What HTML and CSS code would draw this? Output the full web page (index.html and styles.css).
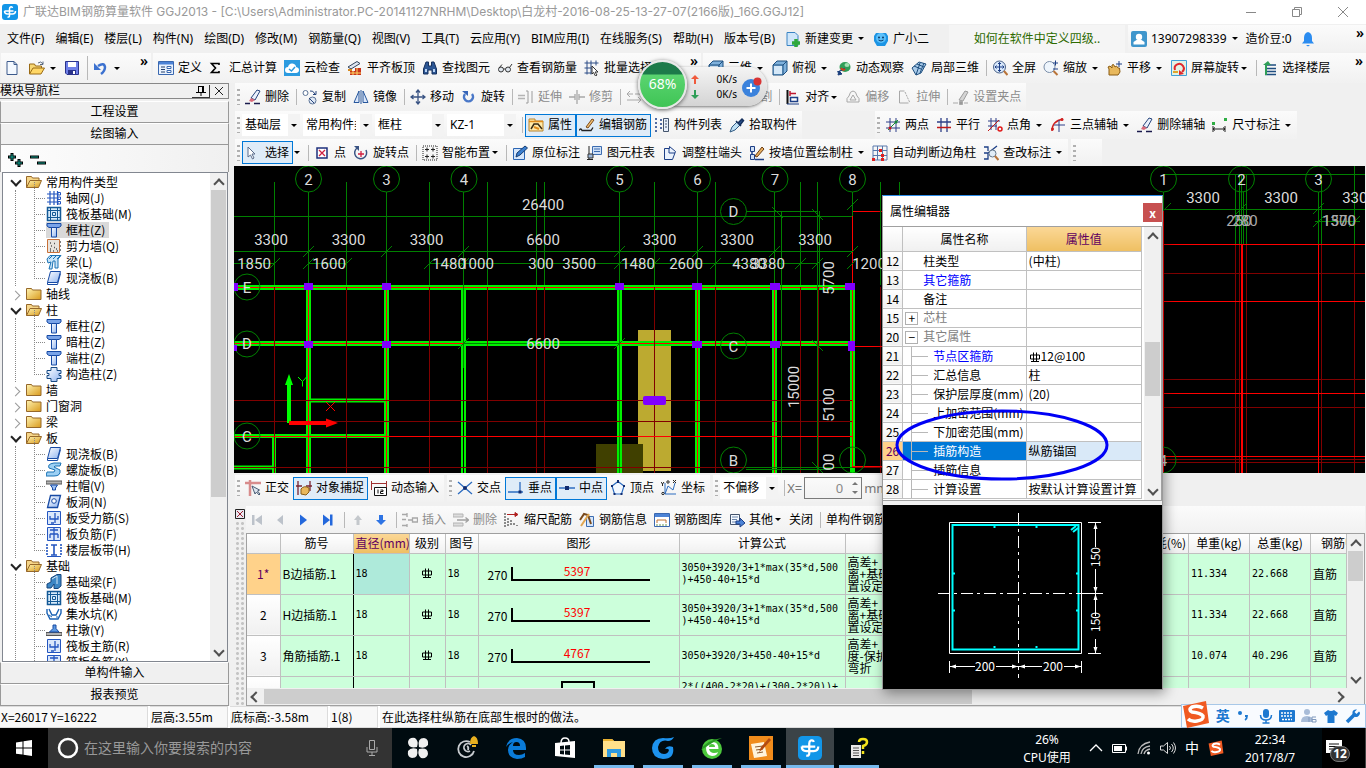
FILE: index.html
```
<!DOCTYPE html>
<html lang="zh-CN">
<head>
  <meta charset="UTF-8" />
  <meta name="viewport" content="width=device-width, initial-scale=1.0"/>
  <title>广联达BIM钢筋算量软件 GGJ2013</title>
  <link rel="stylesheet" href="styles.css">
</head>
<body>

  <!-- icon sprite -->
  <svg class="sprite" aria-hidden="true">
    <defs>
      <linearGradient id="gBlue" x1="0" y1="0" x2="1" y2="1"><stop offset="0" stop-color="#fff"/><stop offset="1" stop-color="#8fb4f0"/></linearGradient>
      <linearGradient id="gGold" x1="0" y1="0" x2="1" y2="1"><stop offset="0" stop-color="#fff3b0"/><stop offset="1" stop-color="#d99a1c"/></linearGradient>
    </defs>
    <symbol id="i-app" viewBox="0 0 16 16"><rect width="16" height="16" rx="3" fill="#1296e8"/><path d="M10.500 4Q10 2.500 8.500 3q-1 .5-1 2v6.500q0 2-2 1.500M2.500 7h9M2.500 7q0 3 3 3h5q3 0 3-3" fill="none" stroke="#fff" stroke-width="1.500"/></symbol>
    <symbol id="i-new" viewBox="0 0 16 16"><path d="M1 1.500h7l3 3v10H1z" fill="#f4f9ff" stroke="#3c5a8c"/><path d="M8 1.500v3h3" fill="none" stroke="#3c5a8c"/></symbol>
    <symbol id="i-open" viewBox="0 0 16 16"><path d="M.5 14V4h5l1 2h6v2" fill="#f7d774" stroke="#9a6a14"/><path d="M.5 14 4 8h11.500L12 14z" fill="#ffd766" stroke="#9a6a14"/><path d="M9 3q3-2.500 5 1m0-2.500v3h-3" fill="none" stroke="#5a6a80"/></symbol>
    <symbol id="i-save" viewBox="0 0 16 16"><path d="M1.500 1.500h13v13H3l-1.500-1.500z" fill="#6f7fe8" stroke="#2a338c"/><path d="M4 2h8v5H4z" fill="#fff"/><path d="M4 10h8v4.500H4z" fill="#2a338c"/><path d="M9 11h2v3H9z" fill="#fff"/></symbol>
    <symbol id="i-undo" viewBox="0 0 16 16"><path d="M5 6q6-4 7 1 0 4-4 7" fill="none" stroke="#3c72d0" stroke-width="2.500"/><path d="M1 3v7h7z" fill="#3c72d0"/></symbol>
    <symbol id="i-define" viewBox="0 0 16 16"><path d="M.5 1.500h15v13H.5z" fill="#eaf2fd" stroke="#3a68b0"/><path d="M1 2h14v2.500H1z" fill="#4c83d6"/><path d="M3 7h4M3 9.500h4M3 12h4" stroke="#24406c"/><path d="M9 6.500h4v2H9zM9 10.500h4v2H9z" fill="#fff" stroke="#3a68b0"/></symbol>
    <symbol id="i-sigma" viewBox="0 0 16 16"><path d="M10 5V3.500H2.500L6.500 8l-4 4.500H10V11" fill="none" stroke="#000" stroke-width="1.600"/></symbol>
    <symbol id="i-cloud" viewBox="0 0 16 16"><path d="M0 0h16v16H0z" fill="#2b9be0"/><path d="M4 13q-3 0-3-3t3-3q1-4 4.500-3.500T12 7q3 .5 3 3t-3 3z" fill="#fff"/><path d="m5 9 2.500 2L11 7" fill="none" stroke="#2b9be0" stroke-width="1.500"/></symbol>
    <symbol id="i-align" viewBox="0 0 16 16"><path d="m1 7 9-5.500 3 2L4 9z" fill="#dfe6f0" stroke="#33445c"/><path d="M3 11h5v-3h6v7H3z" fill="#c8341c"/><path d="M3 13h11M6 11v4M10 8v7" stroke="#ffd766"/><path d="M1 10h4" stroke="#d98a1c" stroke-width="2"/></symbol>
    <symbol id="i-find" viewBox="0 0 16 16"><path d="M4 2h2.500v4h3V2H12l2.500 7v5H10v-4H6v4H1.500V9z" fill="#2c5694" stroke="#16305c"/><path d="M3 9h2v3H3zM11 9h2v3h-2z" fill="#b8d2f4"/></symbol>
    <symbol id="i-glasses" viewBox="0 0 16 16"><circle cx="4" cy="9.500" r="2.500" fill="#dfe6ee" stroke="#333"/><circle cx="11" cy="9.500" r="2.500" fill="#dfe6ee" stroke="#333"/><path d="M6.500 9h2M12.500 7.500 15 4M2 8 5 4.500" fill="none" stroke="#333"/></symbol>
    <symbol id="i-batch" viewBox="0 0 16 16"><path d="M.5 3h14M.5 8h7M.5 13h7M3 .5v14M7 .5v14M12 .5v5" fill="none" stroke="#2c4c86"/><path d="m8 6 6 6-3 0 2 3-1.500 1-2-3.500L8 14z" fill="#fff" stroke="#333"/></symbol>
    <symbol id="i-cube" viewBox="0 0 16 16"><path d="M1 5 5 1h10v10l-4 4H1z" fill="#7fb1dc" stroke="#1d4e7e"/><path d="M1 5h10v10M11 5l4-4" fill="none" stroke="#1d4e7e"/><path d="M2 6h8v8H2z" fill="#d5e8f8"/></symbol>
    <symbol id="i-orbit" viewBox="0 0 16 16"><ellipse cx="9" cy="7" rx="5.500" ry="5" fill="#2f9e57"/><ellipse cx="11" cy="5" rx="2.500" ry="2" fill="#9fe0b0"/><path d="M1 12q5-1 8-4M2 15l4-1-3-3z" stroke="#1b3f7c" fill="#1b3f7c"/><path d="M5 8q2 3 4 1" stroke="#d23a1c" stroke-width="2" fill="none"/></symbol>
    <symbol id="i-local" viewBox="0 0 16 16"><path d="m1 8 7-6 7 2-5 9-5 2z" fill="#a9cbea" stroke="#1d4e7e"/><path d="m3 6 7 3M6 4l7 3M5 15 9 3M9 13l4-10" fill="none" stroke="#1d4e7e"/></symbol>
    <symbol id="i-full" viewBox="0 0 16 16"><circle cx="7.500" cy="7" r="6" fill="#d8e8fb" stroke="#4a6288"/><path d="M7.500 2.500v9M3 7h9M6 4l1.500-1.500L9 4M6 10l1.500 1.500L9 10M4.500 5.500 3 7l1.500 1.500M10.500 5.500 12 7l-1.500 1.500" fill="none" stroke="#1d3f86"/><path d="m12 11 3.500 4" stroke="#b9743a" stroke-width="2"/></symbol>
    <symbol id="i-zoom" viewBox="0 0 16 16"><circle cx="6.500" cy="7" r="5.500" fill="#eef5fc" stroke="#7a8da8"/><path d="m10.500 11 4 4" stroke="#b9743a" stroke-width="2"/><path d="M10 3h5M12.500 .5v5M10 9h5" stroke="#1d3f86"/></symbol>
    <symbol id="i-pan" viewBox="0 0 16 16"><path d="M2 15V9l-1-2 2-1 2 2V5l1.500-.5L8 7l1.500-1L11 8l1.500 0 .5 4-2 3z" fill="#e8b85c" stroke="#8a5c14"/><path d="M12 1v6M9 4h6" stroke="#1d3f86"/></symbol>
    <symbol id="i-scrrot" viewBox="0 0 16 16"><path d="M.5.500h15v15H.5z" fill="#e2f2e4" stroke="#3fa0d8"/><path d="M4 10a4.500 4.500 0 1 1 7 2" fill="none" stroke="#e0282c" stroke-width="2"/><path d="M8 10v5l5-1z" fill="#e0282c"/><path d="M2 12h5" stroke="#e0a62c" stroke-width="2"/></symbol>
    <symbol id="i-floor" viewBox="0 0 16 16"><path d="M3 5h11M4 8.500h10M4 11.500h10M3 14.500h11" stroke="#1f4e80" stroke-width="1.500"/><path d="M6 1 1 5h8z" fill="#2f9e57"/><path d="M4 5v10" stroke="#2f9e57" stroke-width="2"/></symbol>
    <symbol id="i-erase" viewBox="0 0 16 16"><path d="M6 9 12 1l3 1-5 9z" fill="#eaf0fb" stroke="#26447c"/><path d="M6 9l4 2-3 2-3-1z" fill="#d86a7a"/><path d="M0 14.500h5M9 14.500h6" stroke="#1a1a4c" stroke-width="1.500"/></symbol>
    <symbol id="i-copy" viewBox="0 0 16 16"><circle cx="3.500" cy="4" r="2.500" fill="#fff" stroke="#5c7396"/><circle cx="10.500" cy="11.500" r="3.500" fill="#dfe8f5" stroke="#5c7396"/><path d="M7 9l5 5M8 2q3-1 5 3m1-3v3.500h-3" fill="none" stroke="#26447c"/></symbol>
    <symbol id="i-mirror" viewBox="0 0 16 16"><path d="M6 2v11.500H1zM10 2v11.500h5z" fill="#dbe7fa" stroke="#26569c"/><path d="M8 1v14" stroke="#26569c"/></symbol>
    <symbol id="i-move" viewBox="0 0 16 16"><path d="M8 1v14M1 8h14M6 3.500 8 1l2 2.500M6 12.500 8 15l2-2.500M3.500 6 1 8l2.500 2M12.500 6 15 8l-2.500 2" fill="none" stroke="#3a5484" stroke-width="1.300"/></symbol>
    <symbol id="i-rotate" viewBox="0 0 16 16"><path d="M4 5a4.500 4.500 0 1 0 7 0" fill="none" stroke="#4a78c8" stroke-width="2.500"/><path d="M1 2h6v5z" fill="#3765b8"/></symbol>
    <symbol id="i-extend" viewBox="0 0 16 16"><path d="M0 6.500h7M0 9.500h7" stroke="#b4b4b4" stroke-width="1.500"/><path d="M8 2h2v12H8M14 2v12" fill="none" stroke="#9c9c9c"/></symbol>
    <symbol id="i-trim" viewBox="0 0 16 16"><path d="M0 8h6M10 8h6M6 5v6M10 5v6M8 1v14" stroke="#a8a8a8" stroke-width="1.300"/></symbol>
    <symbol id="i-break" viewBox="0 0 16 16"><path d="M1 5h6M9 5h6M1 11h14M4 2 1 5l3 3M12 8l3 3-3 3" fill="none" stroke="#a8a8a8"/></symbol>
    <symbol id="i-justify" viewBox="0 0 16 16"><path d="M2.500 1v14" stroke="#101010" stroke-width="2"/><path d="M5 4.500h6M5 2v5" stroke="#c01830" stroke-width="1.500"/><path d="M5.500 8.500h7v4h-7z" fill="#fff" stroke="#1d3f86" stroke-width="1.500"/><path d="M2 15h12" stroke="#1d3f86"/></symbol>
    <symbol id="i-offset" viewBox="0 0 16 16"><path d="M8 2q3 0 4 5 3 2 2 6H2Q1 9 4 7 5 2 8 2z" fill="none" stroke="#a8a8a8"/><path d="M8 6l3 5H5z" fill="none" stroke="#a8a8a8"/></symbol>
    <symbol id="i-stretch" viewBox="0 0 16 16"><path d="M3.500 2v12h9M3.500 2h5" fill="none" stroke="#a8a8a8"/><path d="M9 3l5 11" stroke="#a8a8a8" stroke-dasharray="2 1"/></symbol>
    <symbol id="i-grip" viewBox="0 0 16 16"><path d="m6 11 6-9 3 1-5 9z" fill="#d4d4d4" stroke="#9c9c9c"/><path d="M0 14h5M6.500 12.500h3v3h-3zM11 14h4" fill="#999" stroke="#a8a8a8"/></symbol>
    <symbol id="i-prop" viewBox="0 0 16 16"><path d="M1 2h6v2h8v10H1z" fill="#ffe9a8" stroke="#b9832c"/><path d="M1 4.500h14" stroke="#e08c1c" stroke-width="1.500"/><path d="M3 12l3-5 4 0 4 5" fill="none" stroke="#3a2c14" stroke-width="1.500"/><path d="M6 10l5 2" stroke="#e08c1c" stroke-width="2"/></symbol>
    <symbol id="i-editbar" viewBox="0 0 16 16"><path d="M0 13.500q2-3 3 0h9l2-3" fill="none" stroke="#222" stroke-width="1.300"/><path d="m7 10 6-8 2 1-6 8z" fill="#f2c070" stroke="#7a4a1c"/></symbol>
    <symbol id="i-list" viewBox="0 0 16 16"><path d="M1 2h3M1 6h3M1 10h3M1 14h3M6 3h2M6 7h2M6 11h2" stroke="#1d3f86" stroke-width="1.500" stroke-dasharray="2 1"/><path d="M9.500 1.500h5v13h-5z" fill="#e6eefb" stroke="#44546c"/><path d="M11 4h2M11 7h2M11 10h2" stroke="#44546c"/></symbol>
    <symbol id="i-pick" viewBox="0 0 16 16"><path d="m1 15 2-5 5-5 3 3-5 5z" fill="#bfe0f4" stroke="#335c84"/><path d="m7 4 5 5M9 6l4-4 1.500 1.500L11 8z" stroke="#16305c" stroke-width="1.500" fill="#2c5694"/></symbol>
    <symbol id="i-twopt" viewBox="0 0 16 16"><path d="M5 1v14M11 1v14M1 5h14M1 11h14" stroke="#2e3f88"/><path d="M3 13 13 3" stroke="#188a34"/><circle cx="5" cy="11" r="1.500" fill="#c01818"/><circle cx="11" cy="5" r="1.500" fill="#188a34"/></symbol>
    <symbol id="i-parallel" viewBox="0 0 16 16"><path d="M5 1v14M11 1v14M1 5h14" stroke="#2e3f88" stroke-width="1.300"/><path d="M1 10.500h14" stroke="#c01818" stroke-width="1.500"/></symbol>
    <symbol id="i-angle" viewBox="0 0 16 16"><path d="M4 1v12M9 1v12M1 4h12M1 9h9" stroke="#2e3f88"/><path d="M1 14 12 3" stroke="#c01818"/><circle cx="13" cy="12" r="2" fill="none" stroke="#e01818" stroke-width="1.500"/></symbol>
    <symbol id="i-three" viewBox="0 0 16 16"><path d="M2 14Q2 4 13 2" fill="none" stroke="#d02020" stroke-width="1.500"/><path d="M9 3v12M4 8h11" stroke="#2e3f88"/><circle cx="2.500" cy="12" r="1.500" fill="#d02020"/><circle cx="12" cy="2.500" r="1.500" fill="#d02020"/></symbol>
    <symbol id="i-dim" viewBox="0 0 16 16"><path d="M1 9v6M13 9v6M1 12h12M3 10.500 1 12l2 1.500M11 10.500 13 12l-2 1.500" fill="none" stroke="#222"/><path d="M0 5h3v3H0zM12 1h3v3h-3z" fill="#2fae44"/></symbol>
    <symbol id="i-cursor" viewBox="0 0 16 16"><path d="M3 2v10l2.500-2 2 4 1.500-1-2-4h3z" fill="#fff" stroke="#5b6d8c"/></symbol>
    <symbol id="i-point" viewBox="0 0 16 16"><path d="M3 3h10v10H3z" fill="#fff" stroke="#1d2f7c" stroke-width="1.500"/><path d="m5 5 6 6M11 5l-6 6" stroke="#d02040" stroke-width="1.300"/></symbol>
    <symbol id="i-rotpt" viewBox="0 0 16 16"><path d="M4 3a6 6 0 1 0 9 2" fill="none" stroke="#3a5484" stroke-width="1.500"/><path d="M1 1h5v5z" fill="#3a5484"/><path d="M8 6v6M5 9h6" stroke="#d02040" stroke-width="1.300"/></symbol>
    <symbol id="i-smart" viewBox="0 0 16 16"><path d="M1 1h14v14H1z" fill="none" stroke="#222" stroke-dasharray="1 1"/><path d="M5 2.500v4M3 4.500h4M11 2.500v4M9 4.500h4M5 9.500v4M3 11.500h4M11 9.500v4M9 11.500h4" stroke="#222"/></symbol>
    <symbol id="i-orig" viewBox="0 0 16 16"><path d="M1.500 3.500h11v11h-11z" fill="#d5e6fb" stroke="#2c66b4"/><path d="m4 12 1-4L13 1l2.500 2L8 10z" fill="#3b7fd0" stroke="#173c70"/></symbol>
    <symbol id="i-coltab" viewBox="0 0 16 16"><path d="M2 1v14M0 14.500h6" stroke="#222"/><path d="M5.500 1.500h9v8h-9z" fill="#cfe0f6" stroke="#3c6cb0"/><path d="M7 4h6M7 6.500h6" stroke="#3c6cb0"/><path d="M1 9h5v4H1z" fill="#9cb6d8" stroke="#333"/></symbol>
    <symbol id="i-adjust" viewBox="0 0 16 16"><path d="M2.500 3.500h5v-2l6 5-3 8h-8z" fill="#eaf2fd" stroke="#1d3f86"/><path d="M7 3.500V8h6" fill="none" stroke="#1d3f86"/></symbol>
    <symbol id="i-wallcol" viewBox="0 0 16 16"><path d="M1.500 1.500h4v5h-4zM1.500 9.500h4v5h-4z" fill="#cfe0f6" stroke="#1d3f86"/><path d="M3 6v4M6 14.500h9" stroke="#1d3f86" stroke-width="1.500"/><path d="m6 11 7-9 2 2-7 8z" fill="#e8b060" stroke="#6a3c14"/></symbol>
    <symbol id="i-auto" viewBox="0 0 16 16"><path d="M1 1h14v14H1zM5.500 1v14M10.500 1v14M1 5.500h14M1 10.500h14" fill="none" stroke="#5878ac"/><path d="M7 4h3v3H7zM0 13h3v3H0zM9 9h3v3H9zM9 13h3v3H9z" fill="#e02020"/></symbol>
    <symbol id="i-check" viewBox="0 0 16 16"><path d="M1 2h4v4M1 8h4v6H1M5 8l9-7" fill="none" stroke="#1d3f86" stroke-width="1.300"/><circle cx="9.500" cy="8.500" r="3.500" fill="#e2edf7" stroke="#66788c"/><path d="m12 11 3.500 4" stroke="#b9743a" stroke-width="2"/></symbol>
    <symbol id="i-ortho" viewBox="0 0 16 16"><path d="M0 3h16M5 0v16" stroke="#d88c8c" stroke-width="2.500"/><path d="m7 6 3 8 1.500-2 2.500 3 1-1-2.500-3 2-1z" fill="#dde4ee" stroke="#4a5c74"/></symbol>
    <symbol id="i-snap" viewBox="0 0 16 16"><path d="M2 1v14M14 1v10M0 6h6M10 6h6" stroke="#7a2430" stroke-width="1.300"/><path d="M5 14V9q3-4 8-1v4l-3 3z" fill="#e8b85c" stroke="#8a5c14"/></symbol>
    <symbol id="i-dyn" viewBox="0 0 16 16"><path d="M.5 1v9M15.500 1v9M1 3.500h14" stroke="#a03030"/><path d="M3.500 7.500h12v8h-12z" fill="#fff" stroke="#111"/><path d="M7 9.500v4M9.500 10h2.500v1.500H9.500v2H12.500" fill="none" stroke="#111"/></symbol>
    <symbol id="i-cross" viewBox="0 0 16 16"><path d="m1 2 14 12M15 2 1 14" stroke="#2c6cc0" stroke-width="1.300"/><circle cx="8" cy="8" r="2" fill="#112c70"/></symbol>
    <symbol id="i-perp" viewBox="0 0 16 16"><path d="M0 12h15M12 2v10" stroke="#2c6cc0" stroke-width="1.300"/><path d="M10.500 10.500h3v3h-3z" fill="#112c70"/></symbol>
    <symbol id="i-mid" viewBox="0 0 16 16"><path d="M0 8h16" stroke="#2c6cc0" stroke-width="1.500"/><path d="M6 6h4v4H6z" fill="#112c70"/></symbol>
    <symbol id="i-vertex" viewBox="0 0 16 16"><path d="M8 1.500 14 6l-2.500 8h-7L2 6z" fill="#f4f9ff" stroke="#2c6cc0" stroke-width="1.200"/><path d="M7 0h2v3H7zM1 5h2v2H1zM13 5h2v2h-2zM3.500 13h2v2h-2zM10.500 13h2v2h-2z" fill="#112c70"/></symbol>
    <symbol id="i-coord" viewBox="0 0 16 16"><path d="M4 3v11h11M4 14 7 6l5 4 2-7" fill="none" stroke="#2c6cc0"/><path d="m0 2 1.500 2L3 2M1.500 4v2M12 0l3 3M15 0l-3 3" stroke="#222" fill="none"/><circle cx="7" cy="2" r="1.200" fill="none" stroke="#222"/><circle cx="2" cy="13.500" r="1.200" fill="none" stroke="#222"/></symbol>
    <symbol id="i-first" viewBox="0 0 16 16"><path d="M3 3h2.500v10H3zM13 3v10L6 8z" fill="#bcc2ca"/></symbol>
    <symbol id="i-prev" viewBox="0 0 16 16"><path d="M11 3v10L5 8z" fill="#bcc2ca"/></symbol>
    <symbol id="i-next" viewBox="0 0 16 16"><path d="M5 2.500v11L12 8z" fill="#2468dc"/></symbol>
    <symbol id="i-last" viewBox="0 0 16 16"><path d="M12 2.500h2.500v11H12zM5 2.500v11L12 8z" fill="#2468dc"/></symbol>
    <symbol id="i-up" viewBox="0 0 16 16"><path d="M8 3 4 8h2.500v5h3V8H12z" fill="#c4c8cc"/></symbol>
    <symbol id="i-down" viewBox="0 0 16 16"><path d="M8 13l5-5h-3V3H6v5H3z" fill="#2e74e4"/></symbol>
    <symbol id="i-insert" viewBox="0 0 16 16"><path d="M0 2.500h5M0 7.500h4M0 13.500h5M5 1v4M5 12v3M6 8h5M10.500 6h5v4h-5z" fill="none" stroke="#a8a8a8" stroke-width="1.300"/></symbol>
    <symbol id="i-delrow" viewBox="0 0 16 16"><path d="M0 2h10v3H0zM0 11h10v3H0z" fill="#ddd" stroke="#b4b4b4"/><path d="M4 8h11M12.500 5.500 15.500 8l-3 2.500" fill="none" stroke="#a0a0a0" stroke-width="1.300"/></symbol>
    <symbol id="i-scale" viewBox="0 0 16 16"><path d="M1 1v14M4 6v8M7 8v6M10 11v3M13 13v1" stroke="#222" stroke-dasharray="2 1"/><path d="M3 2.500h10M11 .5l3 2-3 2z" stroke="#b02020" fill="#b02020"/></symbol>
    <symbol id="i-info" viewBox="0 0 16 16"><path d="M7.500 4.500h7v10h-7z" fill="#d5e6fb" stroke="#3c6cb0"/><path d="M1 8l4-6 4 1 3 9" fill="none" stroke="#7a4a1c" stroke-width="2"/><path d="M2 14 10 2" stroke="#e0a650" stroke-width="2"/></symbol>
    <symbol id="i-lib" viewBox="0 0 16 16"><path d="M.5 1.500h15v13H.5z" fill="#fff" stroke="#3a68b0"/><path d="M1 2h14v3H1z" fill="#4c83d6"/><path d="M3 11V8h9v3" fill="none" stroke="#c07030"/><path d="M2 13h12" stroke="#6b9a54" stroke-dasharray="2 1"/></symbol>
    <symbol id="i-other" viewBox="0 0 16 16"><path d="M1.500 2.500h9v10h-9z" fill="#f4f9ff" stroke="#44546c"/><path d="M3 5h6M3 7.500h5M3 10h4" stroke="#6b84a8"/><path d="M7 9h4V6l5 5-5 4v-3H7z" fill="#4c83d6" stroke="#1d3f86"/></symbol>
    <symbol id="i-newchg" viewBox="0 0 16 16"><path d="M2 1.500h8l3 3v10H2z" fill="#cfe6fa" stroke="#3a84c4"/><path d="M11 8v8M7 12h8" stroke="#2fa83c" stroke-width="3.500"/></symbol>
    <symbol id="i-mascot" viewBox="0 0 16 16"><path d="M3 2 1 5v5l3 5h8l3-5V5l-2-3z" fill="#1c94e4"/><circle cx="8" cy="7" r="5" fill="#5cc0fa"/><circle cx="6" cy="6.500" r="1" fill="#093a68"/><circle cx="10" cy="6.500" r="1" fill="#093a68"/><path d="M5.500 9q2.500 2 5 0" stroke="#093a68" fill="none"/></symbol>
    <symbol id="i-user" viewBox="0 0 16 16"><rect width="16" height="16" rx="2" fill="#3f96cc"/><circle cx="8" cy="6" r="3.200" fill="#fff"/><path d="M2.500 13.500V11l3-2h5l3 2v2.500z" fill="#fff"/></symbol>
    <symbol id="i-bell" viewBox="0 0 16 16"><path d="M8 1q4 1 4 6v3l2 2.500H2L4 10V7q0-5 4-6z" fill="#2b8cf0"/><path d="M6 14h4l-2 1.500z" fill="#2b8cf0"/></symbol>
    <!-- tree icons -->
    <symbol id="t-open" viewBox="0 0 16 16"><path d="M.5 13.500v-11h5l1 1.500h6.500v3" fill="#f6d68a" stroke="#96682a"/><path d="M.5 13.500 4 6.500h11.500l-3 7z" fill="url(#gGold)" stroke="#96682a"/></symbol>
    <symbol id="t-shut" viewBox="0 0 16 16"><path d="M.5 13.500v-11h5l1 1.500h8.500v9.500z" fill="url(#gGold)" stroke="#96682a"/></symbol>
    <symbol id="t-grid" viewBox="0 0 16 16"><path d="M4 1v14M8 1v14M1 4h10M1 8h10M1 12h10M11.500 1v14" stroke="#2456c0" stroke-width="1.200"/><path d="M12 2.500h2.500v2.500H12zM12 7h2.500v2.500H12zM12 11.500h2.500V14H12z" fill="#fff" stroke="#2456c0"/></symbol>
    <symbol id="t-raft" viewBox="0 0 16 16"><path d="M1.500 1.500h13v13h-13z" fill="#d8ecfb" stroke="#145a96" stroke-width="1.500"/><path d="M4.500 1v14M11.500 1v14M1 4.500h14M1 11.500h14M6.500 6.500h3v3h-3z" fill="none" stroke="#145a96"/></symbol>
    <symbol id="t-col" viewBox="0 0 16 16"><path d="M1 1.500h14v2.500l-2 1.500H3L1 4z" fill="#7aa4e8" stroke="#174aa4"/><path d="M5.500 5.500h5v9.500h-5z" fill="url(#gBlue)" stroke="#174aa4"/></symbol>
    <symbol id="t-wall" viewBox="0 0 16 16"><path d="M1.500 1.500h12v13h-12z" fill="#e8e4de" stroke="#c87038"/><path d="M4 11h1M7 13h1M10 11h1M5 8h1M8 9.500h1M11 13h1M4 13h1M4 5h1M8 5.500h1M14 4h1M14 8h1M14 12h1" stroke="#555" stroke-width="1.300"/></symbol>
    <symbol id="t-beam" viewBox="0 0 16 16"><path d="m1 5 3-3.500h11L12 5v9H9V7H7l-1 8H3l2-7-3 1z" fill="#c8e4f8" stroke="#1a72b4"/><path d="M3 5l3-3M7 5l3-3M11 5l3-3" stroke="#1a72b4"/></symbol>
    <symbol id="t-slab" viewBox="0 0 16 16"><path d="M4.500 1.500h10l-3 11h-10z" fill="url(#gBlue)" stroke="#174aa4"/><path d="M1.500 12.500v2h10l3-11" fill="none" stroke="#174aa4"/></symbol>
    <symbol id="t-gzz" viewBox="0 0 16 16"><path d="M5 1.500h6v3h4v3h-2v2h2v3h-4v3H5v-3H1v-3h2v-2H1v-3h4z" fill="url(#gBlue)" stroke="#174a84"/></symbol>
    <symbol id="t-spiral" viewBox="0 0 16 16"><path d="M15 1H8Q1 2 3 6l6 2-1 2H1l-1 4h8q7 0 6-6L8 5l1-1h5z" fill="#9cd0f4" stroke="#1a72b4"/></symbol>
    <symbol id="t-cap" viewBox="0 0 16 16"><path d="M0 3h16v3H0z" fill="#b4b4b4" stroke="#555"/><path d="M4.500 7h7l-2 3v2h-3v-2z" fill="#9cc0f4" stroke="#174aa4"/></symbol>
    <symbol id="t-hole" viewBox="0 0 16 16"><path d="M4.500 1.500h10l-3 12h-10z" fill="url(#gBlue)" stroke="#174aa4" stroke-width="1.300"/><circle cx="8" cy="7" r="2.300" fill="#fff" stroke="#174aa4"/></symbol>
    <symbol id="t-rebar" viewBox="0 0 16 16"><path d="M1.500 1.500h13v13h-13z" fill="#dbe8fb" stroke="#2456c0"/><path d="M9 3v10M4 6v3h8V6M5 13h3" fill="none" stroke="#2456c0" stroke-width="1.300"/></symbol>
    <symbol id="t-neg" viewBox="0 0 16 16"><path d="M1.500 1.500h13v13h-13z" fill="#dbe8fb" stroke="#2456c0"/><path d="M8 2v12M4 4h8M4 8h8M4 8v4M12 8v4" fill="none" stroke="#2456c0" stroke-width="1.300"/></symbol>
    <symbol id="t-band" viewBox="0 0 16 16"><path d="M1 2v12M15 2v12" stroke="#2456c0" stroke-width="1.600" stroke-dasharray="2 1"/><path d="M5 3h6M5 13h6M8 3v10" stroke="#2456c0" stroke-width="1.600"/><path d="M1 14.500h14" stroke="#2456c0"/></symbol>
    <symbol id="t-fbeam" viewBox="0 0 16 16"><path d="M1 14V10l4-2V4l6-3.500h4V12l-3 2.500H8V10l-3 4z" fill="#3c86c4" stroke="#14447c"/><path d="m6 5 5-3v8" fill="none" stroke="#d5e8f8"/></symbol>
    <symbol id="t-pit" viewBox="0 0 16 16"><path d="M1 3v4l3 6h8l3-6V3M3 3l3 6h4l3-6" fill="none" stroke="#1a62b4" stroke-width="1.400"/><path d="M3 9l3 2M10 11h2" stroke="#1a62b4"/></symbol>
    <symbol id="t-pier" viewBox="0 0 16 16"><path d="M0 10.500h16v3H0z" fill="#b4b4b4" stroke="#555"/><path d="M3.500 10 7 6.500V3h3v3.500l3 3.500z" fill="#5c98e0" stroke="#174aa4"/></symbol>
    <symbol id="rebar" viewBox="0 0 12 12"><path d="M1.500 4h9v4h-9zM4.500 1.500v9M7.500 1.500v9M2 10.500h8" fill="none" stroke="#000"/></symbol>
    <!-- taskbar and tray -->
    <symbol id="k-fan" viewBox="0 0 24 24"><path d="M11 11Q2 13 2 6q1-5 7-4 4 3 2 9zM13 11q-2-9 5-9 5 1 4 7-3 4-9 2zM13 13q9-2 9 5-1 5-7 4-4-3-2-9zM11 13q2 9-5 9-5-1-4-7 3-4 9-2z" fill="#f0f0f0"/></symbol>
    <symbol id="k-swirl" viewBox="0 0 24 24"><path d="M19 15a8 8 0 1 1-4-9M15 15a4 4 0 1 1 1-6M12 10q2 1 1 4" fill="none" stroke="#c8ccd0" stroke-width="1.800"/><path d="M19 0q4 1 4 8h-8q0-7 4-8zM17 9h4v2h-4z" fill="#e8b020"/></symbol>
    <symbol id="k-edge" viewBox="0 0 24 24"><path d="M2 11Q4 2 13 2q9 1 9 10v2H9q0 5 6 5 3 0 6-2v4q-3 2-8 2-9-1-9-9 0-5 5-8-4 1-7 5zm7-1h7q0-4-3.500-4T9 10z" fill="#0a7bd8"/></symbol>
    <symbol id="k-store" viewBox="0 0 24 24"><path d="m2 7 20-2v17L2 20z" fill="#fff"/><path d="M8 7q0-5 4-5t4 4" fill="none" stroke="#fff" stroke-width="1.500"/><path d="M7 10l4-.5v4H7zM12 9.500l5-.5v4.500h-5zM7 14.500h4v4L7 18zM12 14.500h5v4.500l-5-.5z" fill="#000b10"/></symbol>
    <symbol id="k-folder" viewBox="0 0 24 24"><path d="M1 3h9l2 2h11v16H1z" fill="#ffe08a"/><path d="M1 3h9l2 2H1z" fill="#e8b030"/><path d="M5 21v-8h14v8h-4v-4H9v4z" fill="#2f9be0"/></symbol>
    <symbol id="k-g" viewBox="0 0 24 24"><path d="M23 1q-2 4-6 4-8-2-10 6 0 7 6 7 4 0 5-4-1-2-4-1 2-4 8-2 2 12-10 12Q1 22 1 12 2 2 12 2q7 1 11-1z" fill="#1d93ee"/></symbol>
    <symbol id="k-360" viewBox="0 0 24 24"><circle cx="12" cy="13" r="10" fill="#4cc83c"/><path d="M6 12q1-6 6.500-6 6 0 6 7H9q1 4 5 4 3 0 4-1-1 4-6 4-6-1-6-8zm3-1h6q0-3-3-3t-3 3z" fill="#fff"/><path d="M1 14Q6 4 22 2q-8 3-13 7" fill="#2a9a24"/></symbol>
    <symbol id="k-note" viewBox="0 0 24 24"><path d="M0 0h24v24H0z" fill="#f08c1c"/><path d="m2 8 13-2 3 14-13 2z" fill="#fff4dc"/><path d="M6 11l8-1M7 14l7-1M8 17l6-1" stroke="#8a5a30"/><path d="m10 16 2-5 8-9 2 2-8 9z" fill="#b44a10"/></symbol>
    <symbol id="k-help" viewBox="0 0 24 24"><path d="M4 9h10v13H4z" fill="#e8e8e8"/><path d="M6 12h6M6 14.500h6M6 17h6M6 19.500h6" stroke="#555"/><path d="M12 6q0-3 4-3t4 3q0 3-4 4v3M16 15v3" fill="none" stroke="#f4e41c" stroke-width="2.500"/></symbol>
    <symbol id="k-sogou" viewBox="0 0 28 28"><path d="m1 6 23-5 3 22-22 5z" fill="#f05a22"/><path d="M21 8q-5-3-11-1-4 3 0 5 9 1 11 4 1 4-6 5-6 1-9-2" fill="none" stroke="#fff" stroke-width="3.500"/></symbol>
  </svg>

  <header class="titlebar">
    <svg class="ic"><use href="#i-app"/></svg>
    <h1>广联达BIM钢筋算量软件 GGJ2013 - [C:\Users\Administrator.PC-20141127NRHM\Desktop\白龙村-2016-08-25-13-27-07(2166版)_16G.GGJ12]</h1>
    <div class="winbtns">
      <button aria-label="最小化"><svg width="10" height="10"><path d="M0 5.500h10"/></svg></button>
      <button aria-label="还原"><svg width="10" height="10"><path d="M.5 2.500h7v7h-7zM2.500 2.500v-2h7v7h-2"/></svg></button>
      <button aria-label="关闭"><svg width="10" height="10"><path d="m0 0 10 10M10 0 0 10"/></svg></button>
    </div>
  </header>

  <nav class="menubar">
    <button>文件(F)</button><button>编辑(E)</button><button>楼层(L)</button><button>构件(N)</button><button>绘图(D)</button><button>修改(M)</button><button>钢筋量(Q)</button><button>视图(V)</button><button>工具(T)</button><button>云应用(Y)</button><button>BIM应用(I)</button><button>在线服务(S)</button><button>帮助(H)</button><button>版本号(B)</button>
    <button class="tb"><svg class="ic"><use href="#i-newchg"/></svg>新建变更<i class="dd"></i></button>
    <button class="tb"><svg class="ic"><use href="#i-mascot"/></svg>广小二</button>
    <a class="tip" href="#">如何在软件中定义四级..</a>
    <div class="account">
      <button class="tb"><svg class="ic"><use href="#i-user"/></svg>13907298339<i class="dd"></i></button>
      <button class="tb">造价豆:0<svg class="ic bell"><use href="#i-bell"/></svg></button>
      <button class="more" aria-label="更多">»</button>
    </div>
  </nav>

  <div class="toolrow main-tools">
    <div class="group files">
      <button class="tb" aria-label="新建"><svg class="ic"><use href="#i-new"/></svg></button>
      <button class="tb" aria-label="打开"><svg class="ic"><use href="#i-open"/></svg><i class="dd"></i></button>
      <button class="tb" aria-label="保存"><svg class="ic"><use href="#i-save"/></svg></button>
      <i class="sep"></i>
      <button class="tb" aria-label="撤销"><svg class="ic"><use href="#i-undo"/></svg><i class="dd"></i></button>
      <button class="more" aria-label="更多">»</button>
    </div>
    <div class="group calc">
      <button class="tb"><svg class="ic"><use href="#i-define"/></svg>定义</button>
      <button class="tb"><svg class="ic"><use href="#i-sigma"/></svg>汇总计算</button>
      <button class="tb"><svg class="ic"><use href="#i-cloud"/></svg>云检查</button>
      <button class="tb"><svg class="ic"><use href="#i-align"/></svg>平齐板顶</button>
      <button class="tb"><svg class="ic"><use href="#i-find"/></svg>查找图元</button>
      <button class="tb"><svg class="ic"><use href="#i-glasses"/></svg>查看钢筋量</button>
      <button class="tb"><svg class="ic"><use href="#i-batch"/></svg>批量选择</button>
      <button class="more" aria-label="更多">»</button>
    </div>
    <div class="group fill view">
      <button class="tb"><svg class="ic"><use href="#i-cube"/></svg>三维<i class="dd"></i></button>
      <button class="tb"><svg class="ic"><use href="#i-cube"/></svg>俯视<i class="dd"></i></button>
      <button class="tb"><svg class="ic"><use href="#i-orbit"/></svg>动态观察</button>
      <button class="tb"><svg class="ic"><use href="#i-local"/></svg>局部三维</button>
      <i class="sep"></i>
      <button class="tb"><svg class="ic"><use href="#i-full"/></svg>全屏</button>
      <button class="tb"><svg class="ic"><use href="#i-zoom"/></svg>缩放<i class="dd"></i></button>
      <button class="tb"><svg class="ic"><use href="#i-pan"/></svg>平移<i class="dd"></i></button>
      <button class="tb"><svg class="ic"><use href="#i-scrrot"/></svg>屏幕旋转<i class="dd tight"></i></button>
      <i class="sep"></i>
      <button class="tb"><svg class="ic"><use href="#i-floor"/></svg>选择楼层</button>
      <button class="more" aria-label="更多">»</button>
    </div>
  </div>

  <div class="workspace">
    <aside class="nav-panel">
      <div class="nav-title"><h2>模块导航栏</h2>
        <button class="pin" aria-label="固定"><svg width="12" height="12"><path d="M3.500 1v6M8.500 1v6M3 1.500h6M1 7.500h10M6 7v4M7.500 1v6" fill="none" stroke="#000"/></svg></button>
        <button aria-label="关闭"><svg width="12" height="12"><path d="m2 2 8 8M10 2l-8 8" stroke="#222"/></svg></button>
      </div>
      <button class="nav-btn">工程设置</button>
      <button class="nav-btn">绘图输入</button>
      <div class="nav-tools">
        <button aria-label="展开全部"><svg width="17" height="16"><path d="M5 1v8M1 5h8M12 7v8M8 11h8" stroke="#000" stroke-width="3"/><path d="M5 2v6M2 5h6M12 8v6M9 11h6" stroke="#10a090"/></svg></button>
        <button aria-label="折叠全部"><svg width="17" height="16"><path d="M0 5h9M7 11h9" stroke="#000" stroke-width="3"/><path d="M1 5h7M8 11h7" stroke="#10a090"/></svg></button>
      </div>
      <div class="tree-box">
        <ul class="tree">
          <li class="open"><svg class="ic"><use href="#t-open"/></svg>常用构件类型
            <ul>
              <li><svg class="ic"><use href="#t-grid"/></svg>轴网(J)</li>
              <li><svg class="ic"><use href="#t-raft"/></svg>筏板基础(M)</li>
              <li class="selected"><span><svg class="ic"><use href="#t-col"/></svg>框柱(Z)</span></li>
              <li><svg class="ic"><use href="#t-wall"/></svg>剪力墙(Q)</li>
              <li><svg class="ic"><use href="#t-beam"/></svg>梁(L)</li>
              <li><svg class="ic"><use href="#t-slab"/></svg>现浇板(B)</li>
            </ul>
          </li>
          <li><svg class="ic"><use href="#t-shut"/></svg>轴线</li>
          <li class="open"><svg class="ic"><use href="#t-open"/></svg>柱
            <ul>
              <li><svg class="ic"><use href="#t-col"/></svg>框柱(Z)</li>
              <li><svg class="ic"><use href="#t-col"/></svg>暗柱(Z)</li>
              <li><svg class="ic"><use href="#t-col"/></svg>端柱(Z)</li>
              <li><svg class="ic"><use href="#t-gzz"/></svg>构造柱(Z)</li>
            </ul>
          </li>
          <li><svg class="ic"><use href="#t-shut"/></svg>墙</li>
          <li><svg class="ic"><use href="#t-shut"/></svg>门窗洞</li>
          <li><svg class="ic"><use href="#t-shut"/></svg>梁</li>
          <li class="open"><svg class="ic"><use href="#t-open"/></svg>板
            <ul>
              <li><svg class="ic"><use href="#t-slab"/></svg>现浇板(B)</li>
              <li><svg class="ic"><use href="#t-spiral"/></svg>螺旋板(B)</li>
              <li><svg class="ic"><use href="#t-cap"/></svg>柱帽(V)</li>
              <li><svg class="ic"><use href="#t-hole"/></svg>板洞(N)</li>
              <li><svg class="ic"><use href="#t-rebar"/></svg>板受力筋(S)</li>
              <li><svg class="ic"><use href="#t-neg"/></svg>板负筋(F)</li>
              <li><svg class="ic"><use href="#t-band"/></svg>楼层板带(H)</li>
            </ul>
          </li>
          <li class="open"><svg class="ic"><use href="#t-open"/></svg>基础
            <ul>
              <li><svg class="ic"><use href="#t-fbeam"/></svg>基础梁(F)</li>
              <li><svg class="ic"><use href="#t-raft"/></svg>筏板基础(M)</li>
              <li><svg class="ic"><use href="#t-pit"/></svg>集水坑(K)</li>
              <li><svg class="ic"><use href="#t-pier"/></svg>柱墩(Y)</li>
              <li><svg class="ic"><use href="#t-rebar"/></svg>筏板主筋(R)</li>
              <li><svg class="ic"><use href="#t-neg"/></svg>筏板负筋(X)</li>
            </ul>
          </li>
        </ul>
        <div class="vscroll tree-scroll"><i class="arr up"></i><i class="thumb"></i><i class="arr down"></i></div>
      </div>
      <button class="nav-btn">单构件输入</button>
      <button class="nav-btn">报表预览</button>
    </aside>

    <main class="work">
      <div class="toolrow">
        <div class="group">
          <i class="grip"></i>
          <button class="tb"><svg class="ic"><use href="#i-erase"/></svg>删除</button>
          <i class="sep"></i>
          <button class="tb"><svg class="ic"><use href="#i-copy"/></svg>复制</button>
          <button class="tb"><svg class="ic"><use href="#i-mirror"/></svg>镜像</button>
          <i class="sep"></i>
          <button class="tb"><svg class="ic"><use href="#i-move"/></svg>移动</button>
          <button class="tb"><svg class="ic"><use href="#i-rotate"/></svg>旋转</button>
          <i class="sep"></i>
          <button class="tb" disabled><svg class="ic"><use href="#i-extend"/></svg>延伸</button>
          <button class="tb" disabled><svg class="ic"><use href="#i-trim"/></svg>修剪</button>
          <i class="sep"></i>
          <button class="tb" disabled><svg class="ic"><use href="#i-break"/></svg>打断</button>
          <button class="tb" disabled><svg class="ic"><use href="#i-break"/></svg>合并</button>
          <button class="tb" disabled><svg class="ic"><use href="#i-break"/></svg>分割</button>
          <i class="sep"></i>
          <button class="tb"><svg class="ic"><use href="#i-justify"/></svg>对齐<i class="dd tight"></i></button>
          <button class="tb" disabled><svg class="ic"><use href="#i-offset"/></svg>偏移</button>
          <button class="tb" disabled><svg class="ic"><use href="#i-stretch"/></svg>拉伸</button>
          <i class="sep"></i>
          <button class="tb" disabled><svg class="ic"><use href="#i-grip"/></svg>设置夹点</button>
        </div>
      </div>

      <div class="toolrow">
        <div class="group">
          <i class="grip"></i>
          <span class="combo c-floor"><select aria-label="楼层"><option>基础层</option></select></span>
          <span class="combo"><select aria-label="构件类别"><option>常用构件类型</option></select></span>
          <span class="combo"><select aria-label="构件类型"><option>框柱</option></select></span>
          <span class="combo"><select aria-label="构件名称"><option>KZ-1</option></select></span>
          <i class="sep"></i>
          <button class="tb on"><svg class="ic"><use href="#i-prop"/></svg>属性</button>
          <button class="tb on"><svg class="ic"><use href="#i-editbar"/></svg>编辑钢筋</button>
          <button class="tb"><svg class="ic"><use href="#i-list"/></svg>构件列表</button>
          <button class="tb"><svg class="ic"><use href="#i-pick"/></svg>拾取构件</button>
        </div>
        <div class="group axis-tools">
          <i class="grip"></i>
          <button class="tb"><svg class="ic"><use href="#i-twopt"/></svg>两点</button>
          <button class="tb"><svg class="ic"><use href="#i-parallel"/></svg>平行</button>
          <button class="tb"><svg class="ic"><use href="#i-angle"/></svg>点角<i class="dd"></i></button>
          <button class="tb"><svg class="ic"><use href="#i-three"/></svg>三点辅轴<i class="dd"></i></button>
          <button class="tb"><svg class="ic"><use href="#i-erase"/></svg>删除辅轴</button>
          <button class="tb"><svg class="ic"><use href="#i-dim"/></svg>尺寸标注<i class="dd"></i></button>
        </div>
      </div>

      <div class="toolrow draw">
        <div class="group">
          <i class="grip"></i>
          <button class="tb on"><svg class="ic"><use href="#i-cursor"/></svg>选择</button>
          <button class="drop" aria-label="选择方式"><i class="dd"></i></button>
          <i class="sep"></i>
          <button class="tb"><svg class="ic"><use href="#i-point"/></svg>点</button>
          <button class="tb"><svg class="ic"><use href="#i-rotpt"/></svg>旋转点</button>
          <i class="sep"></i>
          <button class="tb"><svg class="ic"><use href="#i-smart"/></svg>智能布置<i class="dd tight"></i></button>
          <i class="sep"></i>
          <button class="tb"><svg class="ic"><use href="#i-orig"/></svg>原位标注</button>
          <button class="tb"><svg class="ic"><use href="#i-coltab"/></svg>图元柱表</button>
          <button class="tb"><svg class="ic"><use href="#i-adjust"/></svg>调整柱端头</button>
          <button class="tb"><svg class="ic"><use href="#i-wallcol"/></svg>按墙位置绘制柱<i class="dd"></i></button>
          <button class="tb"><svg class="ic"><use href="#i-auto"/></svg>自动判断边角柱</button>
          <button class="tb"><svg class="ic"><use href="#i-check"/></svg>查改标注<i class="dd"></i></button>
        </div>
        <div class="group stub"><i class="grip"></i></div>
      </div>

      <div class="canvas">
        <svg width="100%" height="100%" role="img" aria-label="平面图">
          <g transform="translate(-234 -166)" fill="none">
            <path class="olive" d="M638 330h33v141h-33z"/>
            <path class="olive2" d="M596 444h47v29h-47z"/>
            <!-- walls and beams -->
            <path class="wall" d="M234 287.500H855M234 343.500H855M308.500 285V473M386.500 285V473M463.500 290V473M619.500 290V473M697.500 290V473M774.500 290V473M852.500 290V473"/>
            <path class="wall thin" d="M310 400.500H386M234 436H386M274 436V473M234 467.500H274"/>
            <path class="gap" d="M463.500 290V473M697.500 346V473"/>
            <path class="red" d="M234 287.500H852M234 343.500H463M619 343.500H852M308.500 287V473M386.500 287V473M774.500 287V473M697.500 287V473"/>
            <path class="axis" d="M463 343.500H619M619.500 287V473"/>
            <!-- dark reference lines -->
            <path class="dark" d="M234 400.500H852M234 421.500H852M234 467.500H883M274.500 287V473M346.500 287V473M429.500 287V473M487.500 287V473M536.500 287V473M544.500 287V473M654.500 287V473M715.500 287V473M800.500 287V473M818.500 287V473M880.500 287V473"/>
            <path class="red" d="M234 436.500H852M852.500 211V466M852 211.500H883M852 346.500H883M852 466.500H883"/>
            <path class="axis" d="M234 216.500H852M234 251.500H852M234 263.500H274M308 263.500H346M429 263.500H818M274.500 182V285M308.500 192V285M346.500 182V285M386.500 192V285M429.500 182V285M463.500 192V368M487.500 182V285M536.500 182V285M544.500 182V285M619.500 192V285M654.500 182V285M697.500 192V285M715.500 182V285M774.500 192V285M781.500 211V473M800.500 182V285M817.500 182V473M819.500 211V285M852.500 192V216M880.500 182V285M899.500 182V196M746 211.500H818M746 467.500H852M746 469.500H830"/>
            <path class="axis" d="m303 257 11-11m-11 23 11-11M269 269l11-11M341 269l11-11M381 257l11-11M424 269l11-11M458 257l11-11m-11 23 11-11M614 257l11-11m-11 23 11-11M692 257l11-11m7 23 11-11M649 269l11-11M769 257l11-11m-8-39 11 11M795 269l11-11M812 269l11-11m-11-49 11 11M847 257l11-11m-11 23 11-11m-11-48 11-11M812 340l11 11M458 349l11-11M614 349l11-11M812 462l11 11"/>
            <g class="axis"><circle cx="308.500" cy="179" r="13"/><circle cx="386.500" cy="179" r="13"/><circle cx="464" cy="179" r="13"/><circle cx="619.500" cy="179" r="13"/><circle cx="697.500" cy="179" r="13"/><circle cx="775" cy="179" r="13"/><circle cx="852.500" cy="179" r="13"/><circle cx="247" cy="287" r="13"/><circle cx="247" cy="344" r="13"/><circle cx="247" cy="436" r="13"/><circle cx="733.500" cy="211.500" r="13"/><circle cx="733.500" cy="346" r="13"/><circle cx="733.500" cy="460" r="13"/><circle cx="852.500" cy="460" r="13"/></g>
            <!-- columns -->
            <path class="col" d="M234 283h4v8h-4zM234 345h3v6h-3zM304 283h9v7h-9zM382 283h9v7h-9zM615 283h9v7h-9zM692 283h10v7h-10zM770 283h10v7h-10zM845 283h10v7h-10zM304 341h9v7h-9zM382 341h9v7h-9zM692 341h10v7h-10zM770 341h10v7h-10zM848 341h7v10h-7z"/>
            <rect class="col" x="643" y="396" width="23" height="9" rx="2"/>
            <!-- ucs -->
            <path d="M289 423V384" stroke="#0f0" stroke-width="4"/><path d="m285 385 4-11 4 11z" fill="#0f0"/>
            <path d="M289 423h38" stroke="#f00" stroke-width="4"/><path d="m326 418.500 12 4.500-12 4.500z" fill="#f00"/>
            <path d="m298 377 4.500 4.500 4-4.500m-4 4.500v5" stroke="#0f0"/><path d="m326 402 9 9m0-9-9 9" stroke="#f00"/>
            <g class="cad" text-anchor="middle">
              <text x="308.500" y="185">2</text><text x="386.500" y="185">3</text><text x="464" y="185">4</text><text x="619.500" y="185">5</text><text x="697.500" y="185">6</text><text x="775" y="185">7</text><text x="852.500" y="185">8</text>
              <text x="247" y="293">E</text><text x="247" y="349">D</text><text x="247" y="442">C</text><text x="733.500" y="217">D</text><text x="733.500" y="352">C</text><text x="733.500" y="466">B</text>
              <text x="543" y="210">26400</text>
              <text x="271" y="245">3300</text><text x="348.500" y="245">3300</text><text x="426.500" y="245">3300</text><text x="543" y="245">6600</text><text x="659.500" y="245">3300</text><text x="737" y="245">3300</text><text x="815" y="245">3300</text>
              <text x="254" y="269">1850</text><text x="329" y="269">1600</text><text x="449" y="269">1480</text><text x="477" y="269">1000</text><text x="541" y="269">300</text><text x="579" y="269">3500</text><text x="638" y="269">1480</text><text x="686" y="269">2600</text><text x="749" y="269">4380</text><text x="768" y="269">3380</text><text x="869" y="269">1200</text>
              <text x="543" y="349">6600</text>
              <text transform="translate(834 278) rotate(-90)">5700</text><text transform="translate(799 387) rotate(-90)">15000</text><text transform="translate(834 405) rotate(-90)">5100</text><text transform="translate(834 462) rotate(-90)">00</text>
            </g>
            <!-- second block, right of the property window -->
            <path class="dark" d="M1163 273.500H1365M1163 379.500H1365M1163 407.500H1365M1163 459.500H1365M1163 462.500H1365M1235.500 244V473M1246.500 244V473M1321.500 244V473M1354.500 244V473M1239.500 244V473"/>
            <path class="red" d="M1163 244.500H1365M1163 301.500H1365M1163 393.500H1365M1163 456.500H1365M1163.500 209V473M1241.500 244V473M1242.500 244V473M1318.500 244V473"/>
            <path class="axis" d="M1163 174.500H1365M1163 209.500H1365M1163.500 192V209M1235.500 174V244M1239.500 174V244M1241.500 174V244M1243.500 192V244M1246.500 174V244M1318.500 192V244M1321.500 174V244M1354.500 166V244M1315 221.500h45M1160 214l11-11M1236 214l11-11m-11 24 11-11M1313 214l11-11m-11 24 11-11M1349 227l11-11"/>
            <g class="axis"><circle cx="1163.500" cy="179" r="13"/><circle cx="1241.500" cy="179" r="13"/><circle cx="1318.500" cy="179" r="13"/><circle cx="1163" cy="460" r="13"/></g>
            <g class="cad" text-anchor="middle">
              <text x="1163.500" y="185">1</text><text x="1241.500" y="185">2</text><text x="1318.500" y="185">3</text><text x="1163" y="466">4</text>
              <text x="1203" y="203">3300</text><text x="1281" y="203">3300</text><text x="1359" y="203">3300</text>
              <text class="dim" x="1239" y="226">250</text><text class="dim" x="1245" y="226">280</text><text class="dim" x="1339" y="226">1500</text><text class="dim" x="1339" y="226">1370</text>
            </g>
          </g>
        </svg>
      </div>

      <div class="toolrow snap">
        <div class="group">
          <i class="grip"></i>
          <button class="tb"><svg class="ic"><use href="#i-ortho"/></svg>正交</button>
          <button class="tb on"><svg class="ic"><use href="#i-snap"/></svg>对象捕捉</button>
          <button class="tb"><svg class="ic"><use href="#i-dyn"/></svg>动态输入</button>
        </div>
        <div class="group">
          <i class="grip"></i>
          <button class="tb"><svg class="ic"><use href="#i-cross"/></svg>交点</button>
          <button class="tb on"><svg class="ic"><use href="#i-perp"/></svg>垂点</button>
          <button class="tb on"><svg class="ic"><use href="#i-mid"/></svg>中点</button>
          <button class="tb"><svg class="ic"><use href="#i-vertex"/></svg>顶点</button>
          <button class="tb"><svg class="ic"><use href="#i-coord"/></svg>坐标</button>
        </div>
        <div class="group">
          <i class="grip"></i>
          <span class="combo c-floor"><select aria-label="偏移方式"><option>不偏移</option></select></span>
          <i class="sep"></i>
          <label class="offs" for="offX">X=</label>
          <span class="spin"><input id="offX" type="text" value="0" disabled><i class="tri up"></i><i class="tri down"></i></span>
          <span class="offs">mm</span>
        </div>
      </div>

      <section class="rebar-panel">
        <div class="side-grip"><button aria-label="关闭面板"><svg width="10" height="10"><path d="M.5.500h9v9h-9z" fill="#e8e8f0" stroke="#222"/><path d="m2 2 6 6M8 2 2 8" stroke="#a02030"/></svg></button></div>
        <div class="rebar-main">
          <div class="toolrow edit">
            <div class="group fill">
              <button class="tb" aria-label="首行" disabled><svg class="ic"><use href="#i-first"/></svg></button>
              <button class="tb" aria-label="上一行" disabled><svg class="ic"><use href="#i-prev"/></svg></button>
              <button class="tb" aria-label="下一行"><svg class="ic"><use href="#i-next"/></svg></button>
              <button class="tb" aria-label="末行"><svg class="ic"><use href="#i-last"/></svg></button>
              <i class="sep wide"></i>
              <button class="tb" aria-label="上移" disabled><svg class="ic"><use href="#i-up"/></svg></button>
              <button class="tb" aria-label="下移"><svg class="ic"><use href="#i-down"/></svg></button>
              <i class="sep"></i>
              <button class="tb" disabled><svg class="ic"><use href="#i-insert"/></svg>插入</button>
              <button class="tb" disabled><svg class="ic"><use href="#i-delrow"/></svg>删除</button>
              <button class="tb"><svg class="ic"><use href="#i-scale"/></svg>缩尺配筋</button>
              <button class="tb"><svg class="ic"><use href="#i-info"/></svg>钢筋信息</button>
              <button class="tb"><svg class="ic"><use href="#i-lib"/></svg>钢筋图库</button>
              <button class="tb"><svg class="ic"><use href="#i-other"/></svg>其他<i class="dd tight"></i></button>
              <button class="tb">关闭</button>
              <i class="sep"></i>
              <button class="tb">单构件钢筋总重</button>
            </div>
          </div>
          <div class="grid-box">
            <div class="grid-view">
              <table class="grid">
                <colgroup><col class="w-no"><col class="w-name"><col class="w-dia"><col class="w-lv"><col class="w-fig"><col class="w-shape"><col class="w-calc"><col><col class="w-loss"><col class="w-kg"><col class="w-kg"><col class="w-type"></colgroup>
                <thead><tr><th></th><th>筋号</th><th class="hot">直径(mm)</th><th>级别</th><th>图号</th><th>图形</th><th>计算公式</th><th>公式描述</th><th class="end">损耗(%)</th><th>单重(kg)</th><th>总重(kg)</th><th class="clip">钢筋归类</th></tr></thead>
                <tbody>
                  <tr><th class="hot">1*</th><td>B边插筋.1</td><td class="cur num">18</td><td class="mid"><svg width="12" height="12"><use href="#rebar"/></svg></td><td class="num">18</td><td><div class="shape"><span>270</span><b>5397</b></div></td><td class="num">3050+3920/3+1*max(35*d,500<br>)+450-40+15*d</td><td class="desc">高差+<br>离+基础<br>置设定</td><td></td><td class="num">11.334</td><td class="num">22.668</td><td>直筋</td></tr>
                  <tr><th>2</th><td>H边插筋.1</td><td class="num">18</td><td class="mid"><svg width="12" height="12"><use href="#rebar"/></svg></td><td class="num">18</td><td><div class="shape"><span>270</span><b>5397</b></div></td><td class="num">3050+3920/3+1*max(35*d,500<br>)+450-40+15*d</td><td class="desc">高差+<br>离+基础<br>置设定</td><td></td><td class="num">11.334</td><td class="num">22.668</td><td>直筋</td></tr>
                  <tr><th>3</th><td>角筋插筋.1</td><td class="num">18</td><td class="mid"><svg width="12" height="12"><use href="#rebar"/></svg></td><td class="num">18</td><td><div class="shape"><span>270</span><b>4767</b></div></td><td class="num">3050+3920/3+450-40+15*d</td><td class="desc">高差+<br>度-保护<br>弯折</td><td></td><td class="num">10.074</td><td class="num">40.296</td><td>直筋</td></tr>
                  <tr class="cut"><th></th><td></td><td></td><td></td><td></td><td><div class="stirrup"></div></td><td class="num">2*((400-2*20)+(300-2*20))+</td><td></td><td></td><td></td><td></td><td></td></tr>
                </tbody>
              </table>
            </div>
            <div class="vscroll grid-scroll"><i class="arr up"></i><i class="thumb"></i><i class="arr down"></i></div>
            <div class="hscroll"><i class="arr left"></i><i class="thumb"></i><i class="arr right"></i></div>
          </div>
        </div>
      </section>
    </main>
  </div>

  <footer class="statusbar">
    <span class="s1">X=26017 Y=16222</span><span class="s2">层高:3.55m</span><span class="s3">底标高:-3.58m</span><span class="s4">1(8)</span><span class="s5">在此选择柱纵筋在底部生根时的做法。</span>
  </footer>

  <div class="taskbar">
    <button class="start" aria-label="开始"><svg width="16" height="16"><path d="m0 2.500 6.500-1v6H0zM7.500 1.300 16 0v7.500H7.500zM0 8.500h6.500v6L0 13.700zM7.500 8.500H16V16l-8.500-1.300z" fill="#fff"/></svg></button>
    <div class="search">
      <svg width="22" height="22"><circle cx="11" cy="11" r="9" fill="none" stroke="#fff" stroke-width="2.500"/></svg>
      <input type="text" aria-label="搜索" placeholder="在这里输入你要搜索的内容">
      <svg width="12" height="18"><path d="M3.500 1.500h5v9h-5zM1 8v5h10V8M6 13v3.500M3 16.500h6" fill="none" stroke="#aaa"/></svg>
    </div>
    <div class="apps">
      <button aria-label="工具"><svg><use href="#k-fan"/></svg></button>
      <button aria-label="提醒"><svg><use href="#k-swirl"/></svg></button>
      <button aria-label="Edge"><svg><use href="#k-edge"/></svg></button>
      <button aria-label="应用商店"><svg><use href="#k-store"/></svg></button>
      <button class="run" aria-label="文件资源管理器"><svg><use href="#k-folder"/></svg></button>
      <button class="run" aria-label="浏览器"><svg><use href="#k-g"/></svg></button>
      <button class="run" aria-label="安全浏览器"><svg><use href="#k-360"/></svg></button>
      <button class="run" aria-label="便笺"><svg><use href="#k-note"/></svg></button>
      <button class="active" aria-label="钢筋算量"><svg><use href="#i-app"/></svg></button>
      <button class="run" aria-label="帮助"><svg><use href="#k-help"/></svg></button>
    </div>
    <div class="cpu">26%<br>CPU使用</div>
    <div class="tray">
      <svg width="14" height="14"><path d="m1 10 6-6 6 6" fill="none" stroke="#fff" stroke-width="1.300"/></svg>
      <svg width="16" height="14"><path d="M.5 3.500h13v8H.5zM14.500 5.500v4" fill="none" stroke="#fff"/><path d="M2 5h8v5H2z" fill="#fff"/></svg>
      <svg width="14" height="14"><path d="M1 13Q2 3 13 1M4 13q1-7 9-8M7 13q1-4 6-5" fill="none" stroke="#bbb" stroke-width="1.300"/><circle cx="11.500" cy="12" r="1.500" fill="#fff"/></svg>
      <svg width="16" height="14"><path d="M.5 5h3l4-3.500v11L3.500 9h-3zM9.500 5q2 2 0 4M11.500 3q3.500 4 0 8M13.500 1.500q4 5.500 0 11" fill="none" stroke="#ddd"/></svg>
      <span>中</span>
      <svg width="16" height="16"><use href="#k-sogou"/></svg>
    </div>
    <div class="clock">22:34<br>2017/8/7</div>
    <button class="notice" aria-label="通知"><svg width="16" height="16"><path d="M0 0h16v13h-4l-3 3v-3H0z" fill="#fff"/><path d="M3 4h10M3 6.500h10M3 9h10" stroke="#111"/></svg><b>12</b></button>
  </div>

  <!-- floating property editor -->
  <section class="props">
    <div class="props-title"><h2>属性编辑器</h2><button aria-label="关闭">x</button></div>
    <div class="props-grid">
      <table>
        <colgroup><col class="p-no"><col><col class="p-val"></colgroup>
        <thead><tr><th></th><th>属性名称</th><th class="hot">属性值</th></tr></thead>
        <tbody>
          <tr><th>12</th><td class="n0">柱类型</td><td>(中柱)</td></tr>
          <tr><th>13</th><td class="n0 blue">其它箍筋</td><td></td></tr>
          <tr><th>14</th><td class="n0">备注</td><td></td></tr>
          <tr><th>15</th><td class="grp"><button aria-label="展开">+</button>芯柱</td><td></td></tr>
          <tr><th>20</th><td class="grp"><button aria-label="折叠">−</button>其它属性</td><td></td></tr>
          <tr><th>21</th><td class="n1 blue">节点区箍筋</td><td><svg width="12" height="12"><use href="#rebar"/></svg>12@100</td></tr>
          <tr><th>22</th><td class="n1">汇总信息</td><td>柱</td></tr>
          <tr><th>23</th><td class="n1">保护层厚度(mm)</td><td>(20)</td></tr>
          <tr><th>24</th><td class="n1">上加密范围(mm)</td><td></td></tr>
          <tr><th>25</th><td class="n1">下加密范围(mm)</td><td></td></tr>
          <tr class="sel"><th>26</th><td class="n1">插筋构造</td><td>纵筋锚固</td></tr>
          <tr><th>27</th><td class="n1">插筋信息</td><td></td></tr>
          <tr><th>28</th><td class="n1">计算设置</td><td>按默认计算设置计算</td></tr>
        </tbody>
      </table>
      <div class="vscroll props-scroll"><i class="arr up"></i><i class="thumb"></i><i class="arr down"></i></div>
    </div>
    <div class="preview">
      <svg width="100%" height="100%" role="img" aria-label="柱截面">
        <g transform="translate(-883 -506)" fill="none" stroke="#fff">
          <path d="M949.500 523.500h132v131h-132z"/>
          <path d="M952.500 526h126v124.500h-126z" stroke="#0ff" stroke-width="2"/>
          <path d="m1071 531 5-4m-3 6 5-4M994.500 527v2M1036.500 527v2M994.500 647v2M1036.500 647v2M953 574.500h2M953 611.500h2M1076 574.500h2M1076 611.500h2" stroke="#0ff" stroke-width="2"/>
          <path d="M938 594.500h165M1018.500 514v165" stroke-dasharray="12 4 3 4"/>
          <path d="M1088 523.500h13M1088 654.500h13M1095.500 524v24M1095.500 570v47M1095.500 640v14M1083 594.500h20M949.500 662v12M1081.500 662v12M950 667.500h25M996 667.500h46M1064 667.500h17"/>
          <path d="m1095.500 524-2 6h4zM1095.500 594l-2-6h4zM1095.500 595l-2 6h4zM1095.500 654l-2-6h4zM950 667.500l6-2v4zM1018 667.500l-6-2v4zM1019 667.500l6-2v4zM1081 667.500l-6-2v4z" fill="#fff" stroke="none"/>
          <g class="sec" stroke="none" text-anchor="middle"><text x="985" y="672">200</text><text x="1053" y="672">200</text><text transform="translate(1100 558) rotate(-90)">150</text><text transform="translate(1100 623) rotate(-90)">150</text></g>
        </g>
      </svg>
    </div>
  </section>
  <svg class="mark" width="216" height="74" aria-hidden="true"><ellipse cx="107" cy="36" rx="105" ry="34" fill="none" stroke="#0000f5" stroke-width="3"/></svg>

  <!-- network speed ball -->
  <div class="ball">
    <div class="pill">
      <div class="speed"><span><svg width="8" height="9"><path d="M4 0 0 4h3v5h2V4h3z" fill="#f05a3c"/></svg>0K/s</span><span><svg width="8" height="9"><path d="M4 9 0 5h3V0h2v5h3z" fill="#2f9e57"/></svg>0K/s</span></div>
      <svg width="22" height="22"><circle cx="10" cy="12" r="9" fill="#3b82dc"/><path d="M10 7.500v9M5.500 12h9" stroke="#fff" stroke-width="2"/><circle cx="16.500" cy="5.500" r="4" fill="#d83434"/></svg>
    </div>
    <div class="pct">68%</div>
  </div>

  <div class="ime">
    <svg class="logo" width="28" height="28"><use href="#k-sogou"/></svg>
    <b>英</b>
    <svg width="16" height="16"><circle cx="4" cy="5" r="2" fill="#1d78d0"/><path d="M9 8h2q0 3-2 4" fill="none" stroke="#1d78d0" stroke-width="1.800"/></svg>
    <svg width="16" height="16"><rect x="5" y="1" width="6" height="9" rx="3" fill="#1d78d0"/><path d="M2.500 7q0 5 5.500 5t5.500-5M8 12v3M4.500 15h7" fill="none" stroke="#1d78d0" stroke-width="1.500"/></svg>
    <svg width="16" height="16"><rect y="2" width="16" height="12" rx="1" fill="#1d78d0"/><path d="M2 5h12M2 8h12M3 11.500h10" stroke="#fff" stroke-width="1.500" stroke-dasharray="2 1"/></svg>
    <svg width="16" height="16"><circle cx="6" cy="4" r="3" fill="#a8bcd8"/><path d="M0 14q0-6 6-6t6 6z" fill="#a8bcd8"/><path d="M8 9v5M11 9h4M11 9v5h4v-2.500h-4" fill="none" stroke="#7f98bc"/></svg>
    <svg width="16" height="16"><path d="M5 2q3 2 6 0l4 3-2 3-1.500-1v8h-7V7L3 8 1 5z" fill="#1d78d0"/></svg>
    <svg width="16" height="16"><path d="m2 14 7-7" stroke="#1d78d0" stroke-width="3.500"/><path d="M14 3.500 11.500 6 9.500 4 12 1.500Q8 1 7.500 4t2 4.500 4.500-1 0-4z" fill="#1d78d0"/></svg>
  </div>

</body>
</html>
```

FILE: styles.css
```
* { box-sizing: border-box; }
html, body { height: 100%; }
body {
  margin: 0;
  min-height: 700px;
  display: flex;
  flex-direction: column;
  overflow: hidden;
  background: #f0f0f0;
  color: #000;
  font-family: "Noto Sans", "Noto Sans CJK SC", sans-serif;
  font-size: 12px;
  line-height: 16px;
}
button, input, select {
  font: inherit;
  color: inherit;
  margin: 0;
  padding: 0;
  border: 0;
  background: none;
}
h1, h2 {
  margin: 0;
  font-size: 12px;
  font-weight: 400;
}
.sprite { display: block; width: 0; height: 0; position: absolute; }
.ic { width: 16px; height: 16px; flex: none; display: block; }

/* title */
.titlebar {
  flex: none;
  display: flex;
  align-items: center;
  height: 24px;
  padding-left: 2px;
  background: #fff;
  color: #999;
}
.titlebar h1 { margin-left: 5px; flex: 1; white-space: nowrap; font-family: Inter, "Noto Sans CJK SC", sans-serif; }
.winbtns { display: flex; }
.winbtns button { width: 46px; height: 20px; display: flex; align-items: center; justify-content: center; }
.winbtns svg { fill: none; stroke: #888; }

/* menu */
.menubar {
  flex: none;
  display: flex;
  align-items: center;
  height: 29px;
  padding-left: 2px;
}
.menubar > button { padding: 0 6px 0 5px; white-space: nowrap; }
.menubar > .tb { padding: 0 3px; }
.tip {
  flex: 1;
  margin-left: 16px;
  padding: 6px 0;
  text-align: center;
  color: #2d6a00;
  text-decoration: none;
  background: #f5f5f5;
}
.account {
  display: flex;
  align-items: center;
  width: 238px;
  height: 27px;
  margin-left: 3px;
  background: linear-gradient(#fbfbfb, #f1f1f1);
}
.account .bell { margin-left: 4px; }
.more {
  align-self: flex-start;
  margin-left: auto;
  padding: 0 2px;
  font-size: 14px;
  font-weight: 600;
}

/* toolbars */
.toolrow { flex: none; display: flex; height: 28px; }
.group {
  display: flex;
  align-items: center;
  background: linear-gradient(#fbfbfb, #f1f1f1);
  padding-left: 2px;
  margin-left: 1px;
  padding-right: 1px;
}
.group.fill { flex: 1; }
.tb {
  display: flex;
  align-items: center;
  gap: 4px;
  height: 22px;
  padding: 0 3px 0 2px;
  border: 1px solid transparent;
  white-space: nowrap;
}
.tb:disabled { color: #8c8c8c; }
.tb.on { background: #dfecf8; border-color: #0078d7; height: 23px; }
.dd {
  width: 0;
  height: 0;
  margin: 0 1px;
  border: 3px solid transparent;
  border-top: 3px solid #000;
  border-bottom: 0;
}
.dd.tight { margin: 0 1px 0 -2px; }
.view .dd { margin-right: 2px; }
.drop { display: flex; width: 12px; height: 22px; align-items: center; }
.sep { width: 1px; height: 16px; margin: 0 2px 0 3px; background: #b8b8b8; }
.sep.wide { margin: 0 2px 0 6px; }
.grip {
  width: 3px;
  height: 16px;
  margin-right: 2px;
  background: repeating-linear-gradient(#b0b0b0 0 2px, transparent 2px 5px);
}
.main-tools { height: 30px; }
.main-tools .files { width: 150px; }
.files .sep { height: 24px; }
.main-tools .calc { width: 548px; margin-left: 2px; }
.main-tools .view { margin-left: 2px; }
.axis-tools { margin-left: 73px; }
.draw .stub { width: 31px; margin-left: 3px; }
.combo { position: relative; width: 69px; height: 22px; margin-right: 3px; background: #fff; }
.combo.c-floor { width: 58px; }
.combo select {
  width: 100%;
  height: 22px;
  padding: 0 16px 0 3px;
  appearance: none;
  overflow: hidden;
}
.combo::after {
  content: "";
  position: absolute;
  right: 3px;
  top: 10px;
  border: 3px solid transparent;
  border-top-color: #000;
  border-bottom: 0;
  pointer-events: none;
}
.combo::before {
  content: "";
  position: absolute;
  right: 0;
  top: 0;
  width: 12px;
  height: 22px;
  background: #f3f3f3;
}
.snap { height: 30px; align-items: center; }
.snap .group { height: 27px; margin-right: 2px; }
.offs { color: #777; font-size: 13px; }
.spin {
  position: relative;
  margin: 0 2px;
  border: 1px solid #7a7a7a;
  height: 22px;
}
.spin input { display: block; width: 56px; height: 20px; padding-right: 18px; text-align: right; color: #888; font-size: 13px; }
.tri { position: absolute; right: 3px; border: 3px solid transparent; }
.tri.up { top: 1px; border-bottom-color: #777; }
.tri.down { bottom: 1px; border-top-color: #777; }

/* layout */
.workspace { flex: 1; display: flex; min-height: 0; }
.work {
  flex: 1;
  min-width: 0;
  display: flex;
  flex-direction: column;
  margin-right: 1px;
}
.work .draw { height: 27px; }

/* left panel */
.nav-panel {
  width: 229px;
  margin-right: 5px;
  display: flex;
  flex-direction: column;
}
.nav-title {
  display: flex;
  align-items: center;
  height: 16px;
  margin-bottom: 2px;
  border: 1px solid #888;
  border-left: 0;
}
.nav-title h2 { flex: 1; }
.nav-title button { display: flex; width: 18px; justify-content: center; }
.nav-title .pin { border-right: 1px solid #333; border-bottom: 1px solid #333; }
.nav-btn {
  flex: none;
  height: 22px;
  border: 1px solid #999;
  border-top-color: #fff;
  background: #f0f0f0;
}
.nav-tools {
  display: flex;
  gap: 6px;
  align-items: center;
  height: 27px;
  padding: 2px 0 0 6px;
  border-left: 1px solid #999;
  border-right: 1px solid #999;
  background: linear-gradient(90deg, #fdfdfd, #f0f0f0);
}
.nav-tools svg { display: block; }
.tree-box {
  flex: 1;
  min-height: 0;
  display: flex;
  margin: 0 1px 0 2px;
  border: 1px solid #828790;
  background: #fff;
  font-family: "Noto Sans CJK SC", sans-serif;
}
.tree, .tree ul { list-style: none; margin: 0; padding: 0; }
.tree { flex: 1; padding: 1px 0 0 23px; overflow: hidden; }
.tree li { position: relative; line-height: 16px; white-space: nowrap; }
.tree .ic { display: inline-block; vertical-align: top; margin-right: 4px; }
.tree > li::before {
  content: "";
  position: absolute;
  left: -14px;
  top: 6px;
  width: 6px;
  height: 6px;
  border: solid #999;
  border-width: 0 1px 1px 0;
  transform: rotate(-45deg);
}
.tree > li.open::before { top: 3px; border-color: #222; border-width: 0 2px 2px 0; transform: rotate(45deg); }
.tree > li ul { margin-left: -11px; padding-left: 30px; border-left: 1px dotted #888; }
.tree ul li::before {
  content: "";
  position: absolute;
  left: -12px;
  top: -8px;
  width: 10px;
  height: 16px;
  border: dotted #888;
  border-width: 0 0 1px 1px;
}
.selected span { display: inline-block; background: #d9d9d9; padding-right: 4px; }

/* scrollbars */
.vscroll { display: flex; flex-direction: column; align-items: center; width: 17px; background: #f0f0f0; }
.vscroll .thumb { width: 15px; background: #cdcdcd; }
.hscroll { display: flex; align-items: center; height: 17px; background: #f0f0f0; }
.hscroll .thumb { height: 15px; background: #cdcdcd; }
.arr { flex: none; width: 17px; height: 17px; display: flex; align-items: center; justify-content: center; }
.arr::before { content: ""; width: 6px; height: 6px; border: solid #505050; border-width: 2px 2px 0 0; }
.arr.up::before { transform: translateY(2px) rotate(-45deg); }
.arr.down { margin-top: auto; }
.arr.down::before { transform: translateY(-2px) rotate(135deg); }
.arr.left::before { transform: rotate(-135deg); }
.arr.right::before { transform: rotate(45deg); }
.arr.right { margin-left: auto; }
.tree-scroll .thumb { height: 307px; }
.grid-scroll .thumb { height: 30px; }
.props-scroll .thumb { height: 54px; margin-top: 98px; }
.hscroll .thumb { width: 708px; }

/* drawing */
.canvas { flex: 1; min-height: 0; background: #000; overflow: hidden; }
.canvas svg { display: block; }
.wall { stroke: #00f000; stroke-width: 5; }
.wall.thin { stroke-width: 4; }
.gap { stroke: #000; }
.axis { stroke: #008000; }
.dark { stroke: #800000; }
.red { stroke: #f00; }
.col { fill: #8000ff; }
.olive { fill: #bcaa30; }
.olive2 { fill: #404000; }
.cad { fill: #dcdcdc; font-family: Roboto, sans-serif; font-size: 15px; }
.cad .dim { fill: #aaa; }

/* rebar table */
.rebar-panel { flex: none; display: flex; height: 203px; padding-top: 3px; }
.side-grip {
  width: 12px;
  padding: 1px 1px;
  background: radial-gradient(circle, #c4c4c4 1px, transparent 2px) 0 14px / 5px 5px content-box;
}
.side-grip button { display: block; background: #f0f0f0; width: 10px; height: 14px; }
.side-grip svg { display: block; }
.rebar-main { flex: 1; min-width: 0; display: flex; flex-direction: column; }
.toolrow.edit { height: 27px; }
.edit .group { margin-left: 0; padding-left: 0; }
.grid-box {
  flex: 1;
  min-height: 0;
  display: grid;
  grid-template-columns: minmax(0, 1fr) 17px;
  grid-template-rows: 1fr 17px;
  border: 1px solid #a0a0a0;
  font-family: "Noto Sans CJK SC", sans-serif;
}
.grid-view { overflow: hidden; min-width: 0; min-height: 0; background: #fff; }
.grid { width: 100%; table-layout: fixed; border-collapse: collapse; }
.grid th, .grid td {
  height: 41px;
  padding: 0 2px;
  border: 1px solid #c0c0c0;
  border-left: 0;
  text-align: left;
  font-weight: 400;
  line-height: 12px;
  white-space: nowrap;
  overflow: hidden;
}
.grid td { background: #ccffdb; }
.grid td.num { font-family: "DejaVu Sans Mono", monospace; font-size: 10px; }
.grid th { text-align: center; background: linear-gradient(#fff, #f0f0f0); }
.grid thead th { height: 19px; border-top: 0; line-height: 16px; }
.grid th.hot, .props th.hot { background: linear-gradient(#fbd796, #efbf62); color: #600060; }
.grid tbody th.hot { background: #ffd28a; }
.grid th.end { text-align: right; }
.grid th.clip { text-align: left; padding-left: 10px; }
.grid td.cur { background: #aeeada; }
.grid td:nth-child(2) { border-right: 1px solid #000; }
.grid td.mid { text-align: center; }
.w-no { width: 33px; }
.w-name { width: 73px; }
.w-dia { width: 56px; }
.w-lv { width: 36px; }
.w-fig { width: 33px; }
.w-shape { width: 201px; }
.w-calc { width: 166px; }
.w-loss { width: 58px; }
.w-kg { width: 61px; }
.w-type { width: 36px; }
.shape { display: flex; align-items: flex-end; margin-left: 7px; }
.shape b {
  width: 139px;
  height: 14px;
  margin: 0 0 0 4px;
  padding-right: 10px;
  border: solid #000;
  border-width: 0 0 2px 2px;
  color: #f00;
  font-weight: 400;
  line-height: 8px;
  text-align: center;
}
.grid .cut td { vertical-align: top; padding-top: 4px; }
.stirrup { width: 34px; height: 20px; margin-left: 80px; border: 2px solid #000; }

/* status */
.statusbar { flex: none; display: flex; gap: 2px; height: 22px; background: #fff; font-family: "Noto Sans CJK SC", sans-serif; }
.statusbar span { padding: 2px 1px; border: 1px solid #dcdcdc; border-left: 0; background: #f8f8f8; white-space: nowrap; }
.s1 { width: 148px; }
.s2 { width: 78px; }
.s3 { width: 98px; }
.s4 { width: 48px; }
.statusbar .s5 { flex: 1; padding-left: 2px; }

/* taskbar */
.taskbar { flex: none; display: flex; height: 40px; background: #000b10; color: #fff; }
.start { width: 48px; background: #000; display: flex; align-items: center; justify-content: center; }
.search { display: flex; align-items: center; width: 344px; padding: 0 14px 0 9px; background: #333; }
.search input { flex: 1; min-width: 0; margin-left: 5px; font-size: 14px; outline: 0; }
.search input::placeholder { color: #999; opacity: 1; }
.apps { display: flex; gap: 1px; padding-left: 2px; }
.apps button { width: 48px; display: flex; align-items: center; justify-content: center; }
.apps svg { width: 24px; height: 24px; }
.apps .run { background: linear-gradient(#76b9ed, #76b9ed) bottom / 40px 3px no-repeat; }
.apps .active { background: linear-gradient(#76b9ed, #76b9ed) bottom / 48px 3px no-repeat #3b4347; }
.cpu, .clock { text-align: center; line-height: 18px; padding-top: 3px; }
.cpu { margin-left: auto; width: 72px; }
.tray { display: flex; align-items: center; gap: 9px; margin-left: 6px; font-size: 14px; }
.clock { width: 92px; }
.notice { position: relative; width: 44px; margin-left: 6px; padding-right: 20px; background: #000; display: flex; align-items: center; justify-content: center; border-right: 1px solid #444; }
.notice b {
  position: absolute;
  left: 8px;
  top: 18px;
  width: 20px;
  height: 16px;
  border-radius: 8px;
  background: #333;
  border: 1px solid #777;
  line-height: 14px;
}

/* property editor window */
.props {
  position: absolute;
  left: 882px;
  top: 195px;
  width: 281px;
  border: 1px solid #9a9a9a;
  border-top-color: #2c8ce8;
  background: #f0f0f0;
  box-shadow: 2px 3px 12px rgba(0, 0, 0, 0.4);
  font-family: "Noto Sans CJK SC", sans-serif;
}
.props-title { display: flex; justify-content: space-between; height: 30px; padding-left: 7px; background: #fff; }
.props-title h2 { padding-top: 7px; }
.props-title button { width: 19px; height: 19px; margin-top: 7px; background: #c75050; color: #fff; font-weight: 700; line-height: 16px; }
.props-grid { display: flex; height: 275px; overflow: hidden; border: 1px solid #a0a0a0; border-left: 0; background: #fff; }
.props table { flex: 1; table-layout: fixed; border-collapse: collapse; align-self: flex-start; }
.props th, .props td {
  height: 19px;
  padding: 0 2px;
  border: 1px solid #c0c0c0;
  border-left: 0;
  border-top: 0;
  line-height: 14px;
  text-align: left;
  font-weight: 400;
  white-space: nowrap;
}
.props td:last-child { border-right: 1px solid #c0c0c0; }
.props th { text-align: center; background: linear-gradient(#fff, #f0f0f0); }
.props thead th { height: 24px; }
.p-no { width: 21px; }
.p-val { width: 117px; }
.props td.n0 { padding-left: 20px; }
.props td.n1 {
  padding-left: 30px;
  background: linear-gradient(#b8b8b8, #b8b8b8) 8px 9px / 17px 1px no-repeat, linear-gradient(#b8b8b8, #b8b8b8) 8px 0 / 1px 100% no-repeat;
}
.props td.blue { color: #00f; }
.props td.grp { padding-left: 2px; color: #808080; }
.grp button { width: 13px; height: 13px; margin-right: 5px; border: 1px solid #b0b0b0; color: #000; line-height: 10px; vertical-align: -1px; }
.props td svg { vertical-align: -2px; }
.props .sel th { background: #ffd28a; color: #600060; }
.props .sel td.n1 { background-color: #0078d7; color: #fff; }
.props .sel td:last-child { background: #d9e9f8; }
.props-scroll { margin-left: 2px; }
.preview { height: 184px; margin-top: 4px; background: #000; }
.preview svg { display: block; }
.sec { fill: #fff; font-size: 12px; }
.mark { position: absolute; left: 895px; top: 409px; }

/* speed ball */
.ball { position: absolute; left: 638px; top: 60px; width: 129px; height: 50px; }
.pill {
  position: absolute;
  left: 22px;
  top: 7px;
  width: 107px;
  height: 39px;
  padding: 0 4px 0 31px;
  display: flex;
  align-items: center;
  gap: 4px;
  border-radius: 20px;
  background: linear-gradient(#f4f4f4, #d4d4d4);
  box-shadow: 0 1px 3px rgba(0, 0, 0, 0.5);
}
.speed { flex: 1; font-size: 10px; line-height: 15px; }
.speed span { display: flex; justify-content: space-between; align-items: center; }
.pct {
  position: absolute;
  left: 0;
  top: 0;
  width: 49px;
  height: 49px;
  border: 2px solid #e8e8e8;
  border-radius: 50%;
  background: linear-gradient(#1d7a4a 0 12px, #5ad470 13px, #3fc455);
  box-shadow: 0 1px 4px rgba(0, 0, 0, 0.6);
  color: #fff;
  font-size: 14px;
  line-height: 44px;
  text-align: center;
}

/* input method bar */
.ime {
  position: absolute;
  left: 1181px;
  bottom: 40px;
  right: 0;
  height: 24px;
  display: flex;
  align-items: center;
  justify-content: space-between;
  padding-right: 4px;
  border: 1px solid #a8c8e8;
  background: #f8fbff;
}
.ime .logo { margin-top: -4px; }
.ime b { color: #1d78d0; font-size: 14px; }
```
